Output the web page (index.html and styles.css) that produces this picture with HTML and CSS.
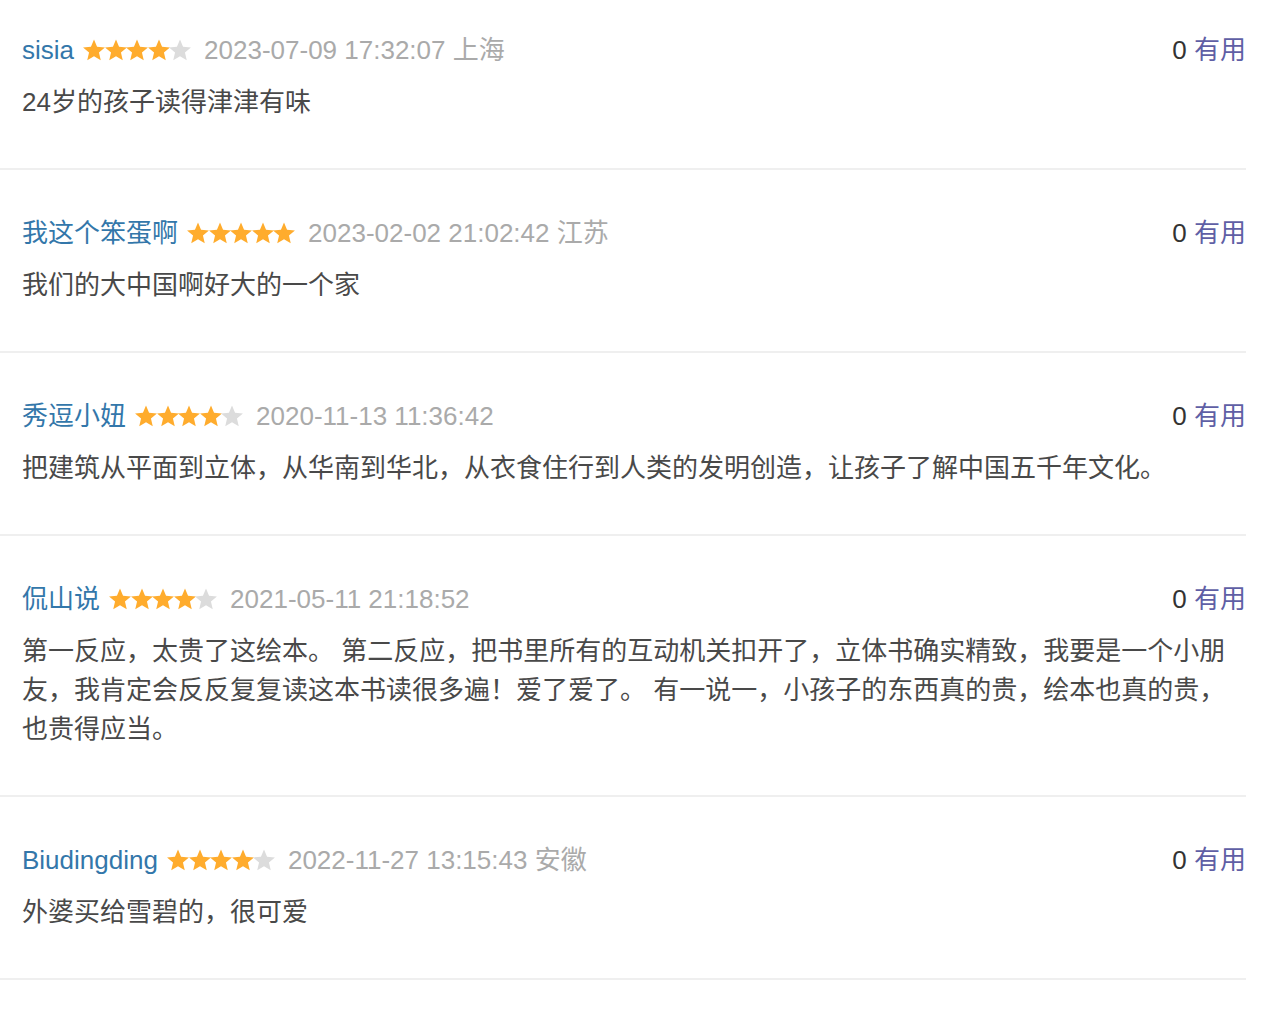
FILE: index.html
```html
<!DOCTYPE html>
<html lang="zh">
<head>
<meta charset="utf-8">
<title>短评</title>
<link rel="stylesheet" href="styles.css">
</head>
<body>
<svg width="0" height="0" class="defs" aria-hidden="true">
  <defs>
    <symbol id="star" viewBox="0 0 22 22">
      <polygon points="11,0.5 14.06,7.79 21.94,8.45 15.95,13.61 17.76,21.3 11,17.2 4.24,21.3 6.05,13.61 0.06,8.45 7.94,7.79"/>
    </symbol>
  </defs>
</svg>
<ul class="comments">
  <li class="comment">
    <div class="meta">
      <div class="info">
        <a class="user">sisia</a>
        <span class="stars"><svg class="on"><use href="#star"/></svg><svg class="on"><use href="#star"/></svg><svg class="on"><use href="#star"/></svg><svg class="on"><use href="#star"/></svg><svg class="off"><use href="#star"/></svg></span>
        <span class="time">2023-07-09 17:32:07 上海</span>
      </div>
      <div class="vote"><span class="count">0</span> <a class="useful">有用</a></div>
    </div>
    <p class="text">24岁的孩子读得津津有味</p>
  </li>
  <li class="comment">
    <div class="meta">
      <div class="info">
        <a class="user">我这个笨蛋啊</a>
        <span class="stars"><svg class="on"><use href="#star"/></svg><svg class="on"><use href="#star"/></svg><svg class="on"><use href="#star"/></svg><svg class="on"><use href="#star"/></svg><svg class="on"><use href="#star"/></svg></span>
        <span class="time">2023-02-02 21:02:42 江苏</span>
      </div>
      <div class="vote"><span class="count">0</span> <a class="useful">有用</a></div>
    </div>
    <p class="text">我们的大中国啊好大的一个家</p>
  </li>
  <li class="comment">
    <div class="meta">
      <div class="info">
        <a class="user">秀逗小妞</a>
        <span class="stars"><svg class="on"><use href="#star"/></svg><svg class="on"><use href="#star"/></svg><svg class="on"><use href="#star"/></svg><svg class="on"><use href="#star"/></svg><svg class="off"><use href="#star"/></svg></span>
        <span class="time">2020-11-13 11:36:42</span>
      </div>
      <div class="vote"><span class="count">0</span> <a class="useful">有用</a></div>
    </div>
    <p class="text">把建筑从平面到立体，从华南到华北，从衣食住行到人类的发明创造，让孩子了解中国五千年文化。</p>
  </li>
  <li class="comment">
    <div class="meta">
      <div class="info">
        <a class="user">侃山说</a>
        <span class="stars"><svg class="on"><use href="#star"/></svg><svg class="on"><use href="#star"/></svg><svg class="on"><use href="#star"/></svg><svg class="on"><use href="#star"/></svg><svg class="off"><use href="#star"/></svg></span>
        <span class="time">2021-05-11 21:18:52</span>
      </div>
      <div class="vote"><span class="count">0</span> <a class="useful">有用</a></div>
    </div>
    <p class="text">第一反应，太贵了这绘本。 第二反应，把书里所有的互动机关扣开了，立体书确实精致，我要是一个小朋友，我肯定会反反复复读这本书读很多遍！爱了爱了。 有一说一，小孩子的东西真的贵，绘本也真的贵，也贵得应当。</p>
  </li>
  <li class="comment">
    <div class="meta">
      <div class="info">
        <a class="user">Biudingding</a>
        <span class="stars"><svg class="on"><use href="#star"/></svg><svg class="on"><use href="#star"/></svg><svg class="on"><use href="#star"/></svg><svg class="on"><use href="#star"/></svg><svg class="off"><use href="#star"/></svg></span>
        <span class="time">2022-11-27 13:15:43 安徽</span>
      </div>
      <div class="vote"><span class="count">0</span> <a class="useful">有用</a></div>
    </div>
    <p class="text">外婆买给雪碧的，很可爱</p>
  </li>
</ul>
</body>
</html>
```

FILE: styles.css
```css
html, body {
  margin: 0;
  padding: 0;
  background: #fff;
}

body {
  font-family: "Liberation Sans", "Noto Sans CJK SC", sans-serif;
  font-size: 26px;
  line-height: 39px;
  color: #494949;
}

.defs {
  position: absolute;
  width: 0;
  height: 0;
  overflow: hidden;
}

.comments {
  list-style: none;
  margin: 0;
  padding: 0;
  width: 1246px;
}

.comment {
  padding: 44px 0 46px 22px;
  border-bottom: 2px solid #efefef;
}

.comment:first-child {
  padding-top: 31px;
}

.meta {
  display: flex;
  justify-content: space-between;
  align-items: center;
  height: 39px;
}

.info {
  display: flex;
  align-items: center;
  white-space: nowrap;
}

.user {
  color: #3377aa;
  text-decoration: none;
}

.stars {
  display: inline-flex;
  align-items: center;
  margin-left: 9px;
  margin-right: 13px;
  position: relative;
  top: -1px;
}

.stars svg {
  width: 22px;
  height: 22px;
  display: block;
  margin-right: -0.4px;
}

.stars .on {
  fill: #ffac2d;
}

.stars .off {
  fill: #dcdcdc;
}

.time {
  color: #aaaaaa;
}

.vote {
  white-space: nowrap;
}

.count {
  color: #333;
}

.useful {
  color: #5f5fa5;
  text-decoration: none;
}

.text {
  margin: 13px 0 0;
  padding: 0;
}
```
